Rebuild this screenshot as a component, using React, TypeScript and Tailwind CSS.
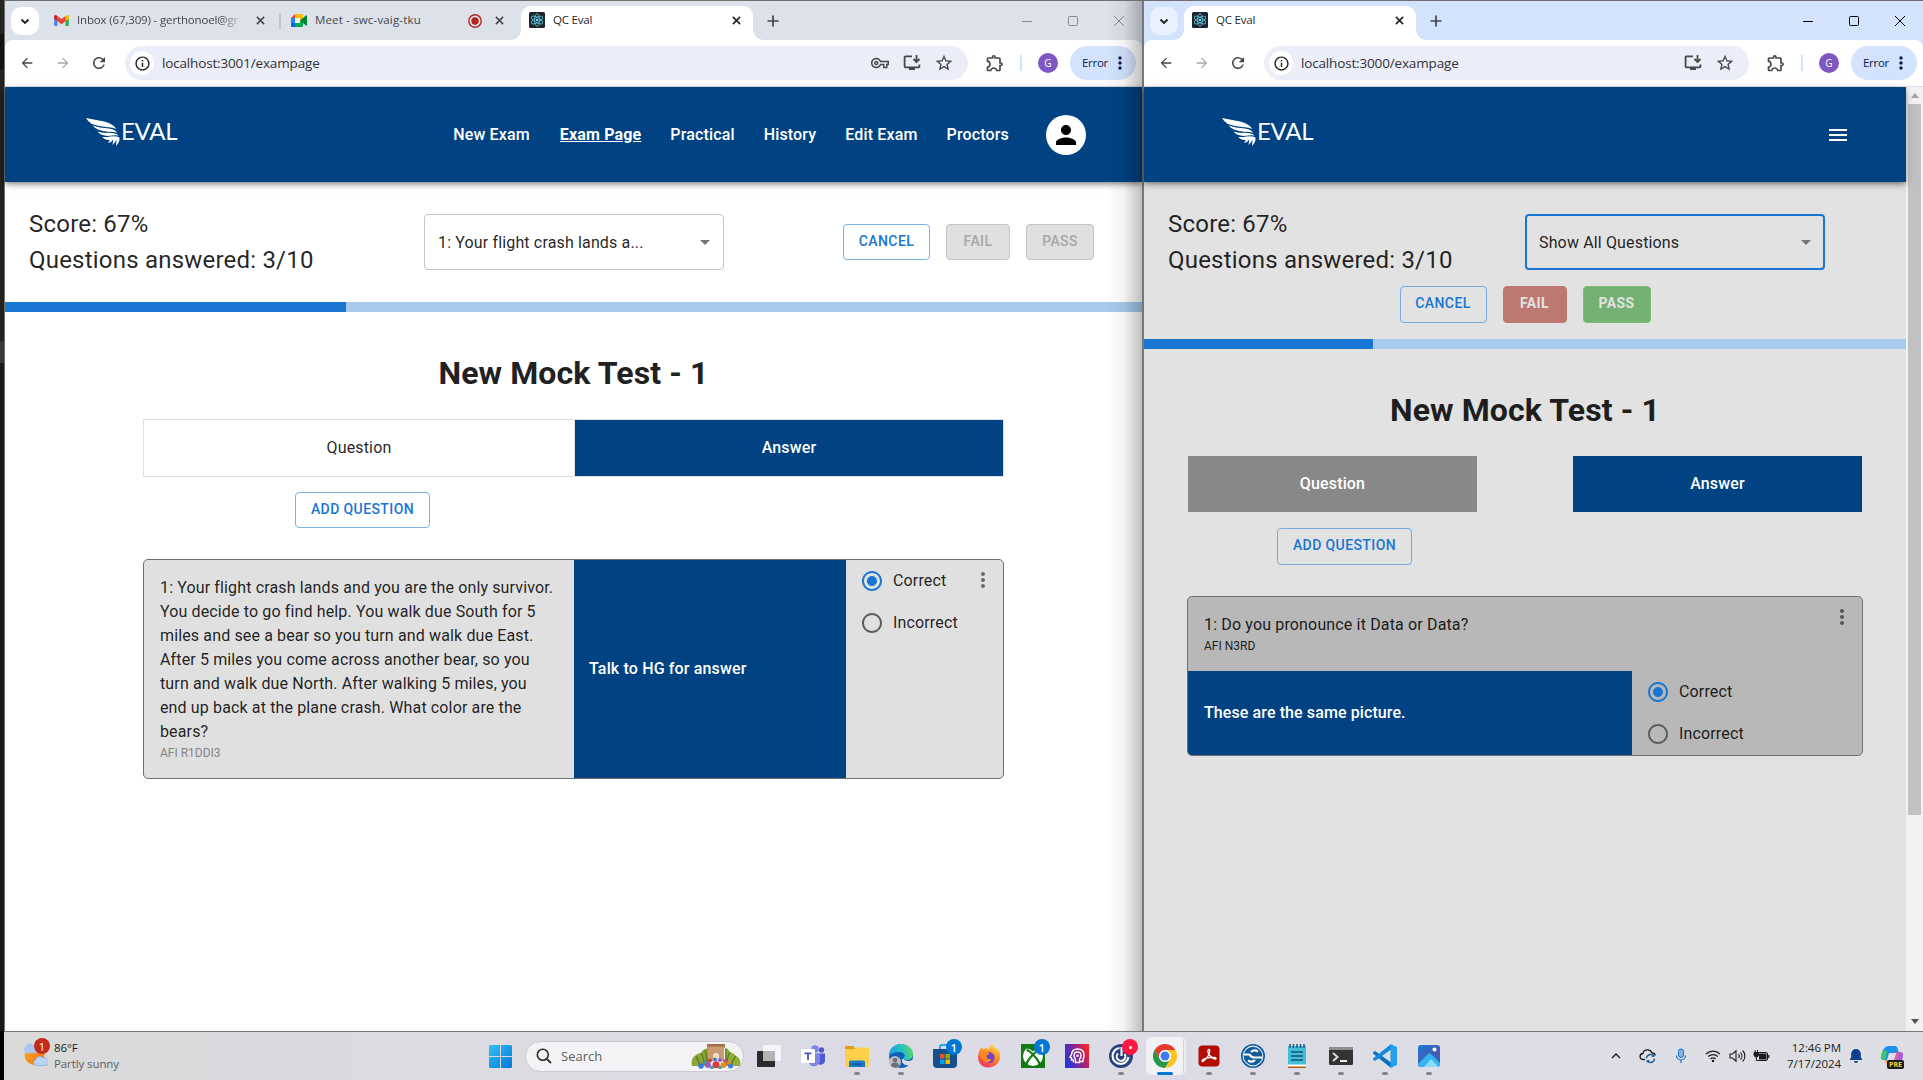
import React from "react";
import {
  MdArrowBack,
  MdArrowForward,
  MdRefresh,
  MdInfoOutline,
  MdOutlineVpnKey,
  MdStarBorder,
  MdOutlineExtension,
  MdMoreVert,
  MdPerson,
  MdMenu,
  MdArrowDropDown,
  MdRadioButtonChecked,
  MdRadioButtonUnchecked,
} from "react-icons/md";

const UI = "font-['Open_Sans','Noto_Sans',sans-serif]";

/* ---------- small drawings ---------- */

function Cross({ className = "" }: { className?: string }) {
  return (
    <svg viewBox="0 0 10 10" className={`size-[9px] shrink-0 ${className}`}>
      <path d="M1 1 9 9M9 1 1 9" stroke="currentColor" strokeWidth="1.7" fill="none" />
    </svg>
  );
}

function GmailIcon() {
  return (
    <svg viewBox="0 0 16 12" className="h-[11px] w-[15px] shrink-0">
      <path d="M0 1.5V11a1 1 0 0 0 1 1h2.6V4.5z" fill="#4285f4" />
      <path d="M16 1.5V11a1 1 0 0 1-1 1h-2.6V4.5z" fill="#34a853" />
      <path d="M12.400 1Q15.500-1 16 1.500V4l-3.600 2.800z" fill="#fbbc04" />
      <path d="M3.600 1Q.5-1 0 1.500V4l3.600 2.800z" fill="#c5221f" />
      <path d="M3.600 1 8 4.300 12.400 1v5.700L8 10 3.600 6.700z" fill="#ea4335" />
    </svg>
  );
}

function MeetIcon() {
  return (
    <svg viewBox="0 0 16 13" className="h-[13px] w-[16px] shrink-0">
      <path d="M0 4 4 0v4z" fill="#ea4335" />
      <path d="M4 0h7a1 1 0 0 1 1 1v4L9 6.500V4H4z" fill="#fbbc04" />
      <path d="M0 4h4v5H0z" fill="#2684fc" />
      <path d="M0 9h4v4H1a1 1 0 0 1-1-1z" fill="#0066da" />
      <path d="M4 4h5v5H4z" fill="#fff" />
      <path d="M4 9h5V6.500l3 1.500v4a1 1 0 0 1-1 1H4z" fill="#00ac47" />
      <path d="M9 6.500 15 1.500q1-.5 1 .5v9q0 1-1 .500z" fill="#00832d" />
    </svg>
  );
}

function ReactFavicon() {
  return (
    <svg viewBox="0 0 16 16" className="size-4 shrink-0">
      <rect width="16" height="16" rx="1.500" fill="#20232a" />
      <g fill="none" stroke="#53b6d0" strokeWidth=".9">
        <ellipse cx="8" cy="8" rx="6.300" ry="2.500" transform="rotate(30 8 8)" />
        <ellipse cx="8" cy="8" rx="6.300" ry="2.500" transform="rotate(90 8 8)" />
        <ellipse cx="8" cy="8" rx="6.300" ry="2.500" transform="rotate(150 8 8)" />
      </g>
      <circle cx="8" cy="8" r="1.300" fill="#61dafb" />
    </svg>
  );
}

function InstallIcon() {
  return (
    <svg viewBox="0 0 20 20" className="size-5 shrink-0">
      <g fill="none" stroke="currentColor" strokeWidth="1.800">
        <path d="M10 3.300H3.500q-.900 0-.900.900v9.200q0 .900.900.900h13q.900 0 .900-.900V11.500" />
        <path d="M14.500 2v6.500M11.500 6l3 3 3-3" />
      </g>
      <path d="M7 14.500h6V17H7z" fill="currentColor" />
    </svg>
  );
}

function WingLogo() {
  return (
    <div className="flex h-[28px] items-start text-white">
      <svg viewBox="0 0 34 28" className="h-[28px] w-[34px] shrink-0" fill="currentColor">
        <path d="M0 0 18 3.500Q27 5.500 30.500 11 26 9.200 22 9.300 10 8 5.500 5.800 2 3.500 0 0z" />
        <path d="M6.500 7.500Q14 10 21 10.200 28 10.500 31.500 14.800 27 13.500 22 13.800 11 13 6.500 7.500z" />
        <path d="M11.500 13.500Q16 15.200 22 14.800 29 14.500 32.800 17.500 28 17 24 17.800 15.500 18.500 11.500 13.500z" />
        <path d="M16 18.700Q20 19.500 24 18.500 30 17.500 33.500 19.500 34 24 30 28L30.500 21.500Q29.500 24.500 26.500 27L27.300 21.500Q25.500 24.500 22 25L24 21.800Q19.500 23 16 18.700z" />
      </svg>
      <span className="ml-[1px] mt-[1px] font-['Lato',sans-serif] text-[24px] font-normal leading-[24px] tracking-[-0.3px]">
        EVAL
      </span>
    </div>
  );
}

/* ---------- browser chrome ---------- */

function ActiveTab() {
  return (
    <div className="relative flex h-[34px] w-[232px] shrink-0 items-center self-end rounded-t-[10px] bg-white pl-2 pr-[12px]">
      <div className="absolute -left-[10px] bottom-0 size-[10px] bg-[radial-gradient(circle_at_0_0,transparent_9.5px,white_10px)]" />
      <div className="absolute -right-[10px] bottom-0 size-[10px] bg-[radial-gradient(circle_at_100%_0,transparent_9.5px,white_10px)]" />
      <div className="mb-[6px] flex w-full items-center">
        <ReactFavicon />
        <span className="ml-2 text-[11.5px] leading-4 tracking-[-0.2px] text-[#1f1f1f]">QC Eval</span>
        <Cross className="ml-auto text-[#1f1f1f]" />
      </div>
    </div>
  );
}

function TabSearch({ tone }: { tone: string }) {
  return (
    <div className={`flex h-7 w-7 shrink-0 items-center justify-center rounded-[10px] ${tone}`}>
      <svg viewBox="0 0 10 10" className="size-[10px]">
        <path d="m1.500 3.500 3.500 3.500 3.500-3.500" stroke="#1f1f1f" strokeWidth="1.800" fill="none" />
      </svg>
    </div>
  );
}

function WindowButtons({ tone }: { tone: string }) {
  return (
    <div className={`ml-auto flex ${tone}`}>
      <svg viewBox="0 0 46 38" className="h-[38px] w-[46px]">
        <path d="M18 19.500h10" stroke="currentColor" />
      </svg>
      <svg viewBox="0 0 46 38" className="h-[38px] w-[46px]">
        <rect x="18.500" y="14.500" width="9" height="9" rx="1" fill="none" stroke="currentColor" />
      </svg>
      <svg viewBox="0 0 46 38" className="h-[38px] w-[46px]">
        <path d="m18 14 10 10M28 14 18 24" stroke="currentColor" fill="none" />
      </svg>
    </div>
  );
}

function Plus() {
  return (
    <svg viewBox="0 0 12 12" className="ml-[14px] size-3 shrink-0">
      <path d="M6 .500v11M.500 6h11" stroke="#444" strokeWidth="1.700" />
    </svg>
  );
}

function Toolbar({ port, showKey }: { port: string; showKey?: boolean }) {
  return (
    <div className="flex h-[47px] shrink-0 items-center rounded-t-lg border-b border-[#dfe1e5] bg-white pl-3 pr-1.5 text-[#474747]">
      <div className="flex gap-4">
        <MdArrowBack className="size-5 p-[2px]" />
        <MdArrowForward className="size-5 p-[2px] text-[#a8a8a8]" />
        <MdRefresh className="size-5 p-px" />
      </div>
      <div className="ml-4 flex h-[34px] flex-1 items-center rounded-full bg-[#ebeef8] pl-[5px] pr-[14px]">
        <div className="flex size-6 items-center justify-center rounded-full bg-white">
          <MdInfoOutline className="size-[17px] text-[#1f1f1f]" />
        </div>
        <span className="ml-2 text-[13.500px] leading-5 tracking-[-0.16px] text-[#303134]">localhost:{port}/exampage</span>
        <div className="ml-auto flex items-center gap-3">
          {showKey && <MdOutlineVpnKey className="size-5 p-px" />}
          <InstallIcon />
          <MdStarBorder className="size-5" />
        </div>
      </div>
      <MdOutlineExtension className="ml-[17px] size-5" />
      <div className="ml-[15px] h-4 w-[2px] bg-[#d3e3fd]" />
      <div className="ml-4 flex size-5 items-center justify-center rounded-full bg-[#7e57c2] text-[10px] text-white">G</div>
      <div className="ml-3 flex h-[34px] w-[66px] items-center rounded-full bg-[#d3e3fd] pl-3 text-[#0b1c4d]">
        <span className="w-[28px] whitespace-nowrap text-[11.500px] leading-4 tracking-[-0.3px]">Error</span>
        <MdMoreVert className="size-5" />
      </div>
    </div>
  );
}

/* ---------- shared page widgets ---------- */

function OutlineButton({ children, className = "" }: { children: React.ReactNode; className?: string }) {
  return (
    <div
      className={`flex shrink-0 items-center justify-center rounded border pb-[3px] text-[14px] font-medium leading-6 tracking-[0.4px] ${className}`}
    >
      {children}
    </div>
  );
}

function Select({ label, className }: { label: string; className: string }) {
  return (
    <div className={`flex h-14 w-[300px] shrink-0 items-center rounded text-[16px] tracking-[0.15px] text-black/87 ${className}`}>
      <span className="pt-px">{label}</span>
      <MdArrowDropDown className="ml-auto size-6 text-[#757575]" />
    </div>
  );
}

function Score() {
  return (
    <div className="text-[24px] leading-9 tracking-[0.21px] text-black/87">
      <p>Score: 67%</p>
      <p>Questions answered: 3/10</p>
    </div>
  );
}

function Progress() {
  return (
    <div className="h-[10px] bg-[#a7caed]">
      <div className="h-full w-[30%] bg-[#1976d2]" />
    </div>
  );
}

function Verdict() {
  return (
    <div className="flex flex-col text-[16px] tracking-[0.15px] text-black/87">
      <div className="flex h-[42px] items-center gap-[9px]">
        <MdRadioButtonChecked className="size-6 text-[#1976d2]" />
        <span>Correct</span>
      </div>
      <div className="flex h-[42px] items-center gap-[9px]">
        <MdRadioButtonUnchecked className="size-6 text-[#5c5c5c]" />
        <span>Incorrect</span>
      </div>
    </div>
  );
}

/* ---------- left window ---------- */

function LeftWindow() {
  const links = ["Practical", "History", "Edit Exam", "Proctors"];
  return (
    <div className="relative flex w-[1138px] shrink-0 flex-col border-l border-t border-[#707070] bg-white">
      <div className="bg-[#dde1e9]">
        <div className={`flex h-[39px] items-center pl-[6px] ${UI}`}>
          <TabSearch tone="bg-white" />
          <div className="ml-[15px] flex items-center">
            <GmailIcon />
            <div className="-mt-px ml-2 w-[168px] whitespace-nowrap text-[11.500px] leading-4 tracking-[-0.15px] text-[#45474a] [mask-image:linear-gradient(to_right,black_85%,transparent_99%)]">
              Inbox (67,309) - gerthonoel@gr
            </div>
            <Cross className="ml-[11px] text-[#474747]" />
          </div>
          <div className="ml-[14px] h-4 w-[2px] bg-[#bfc3ca]" />
          <div className="ml-[10px] flex items-center">
            <MeetIcon />
            <span className="-mt-px ml-2 w-[153px] whitespace-nowrap text-[11.500px] leading-4 tracking-[0.160px] text-[#45474a]">Meet - swc-vaig-tku</span>
            <svg viewBox="0 0 14 14" className="size-[14px]">
              <circle cx="7" cy="7" r="6.200" fill="none" stroke="#b3261e" strokeWidth="1.400" />
              <circle cx="7" cy="7" r="3.700" fill="#b3261e" />
            </svg>
            <Cross className="ml-[13px] text-[#474747]" />
          </div>
          <div className="w-[17px]" />
          <ActiveTab />
          <Plus />
          <WindowButtons tone="text-[#8a8a8a]" />
        </div>
        <div className={UI}>
          <Toolbar port="3001" showKey />
        </div>
      </div>

      <header className="z-10 flex h-[95px] shrink-0 items-center bg-[#004282] pl-[81px] pr-[56px] text-white shadow-[0_2px_4px_-1px_rgba(0,0,0,.3),0_4px_5px_rgba(0,0,0,.16),0_1px_10px_rgba(0,0,0,.12)]">
        <div className="-mt-[5px]">
          <WingLogo />
        </div>
        <nav className="ml-auto flex items-center gap-[29px] text-[16px] font-medium tracking-[0.150px]">
          <span className="mr-px">New Exam</span>
          <span className="font-bold underline">Exam Page</span>
          {links.map((l) => (
            <span key={l}>{l}</span>
          ))}
        </nav>
        <div className="ml-[37px] flex size-10 items-center justify-center rounded-full bg-white">
          <MdPerson className="size-[30px] text-black" />
        </div>
      </header>

      <div className="flex h-[120px] shrink-0 items-start pl-6">
        <div className="mt-6 w-[395px]">
          <Score />
        </div>
        <Select label="1: Your flight crash lands a..." className="mt-8 border border-[#c4c4c4] pl-[13px] pr-[6px]" />
        <div className="ml-[119px] mt-[42px] flex gap-4">
          <OutlineButton className="h-9 w-[87px] border-[#7cb0e6] text-[#1976d2]">CANCEL</OutlineButton>
          <OutlineButton className="h-9 w-16 border-[#c4c4c4] bg-[#e0e0e0] text-[#a6a6a6]">FAIL</OutlineButton>
          <OutlineButton className="h-9 w-[68px] border-[#c4c4c4] bg-[#e0e0e0] text-[#a6a6a6]">PASS</OutlineButton>
        </div>
      </div>
      <Progress />

      <h1 className="mt-[41px] text-center text-[32px] font-bold leading-10 tracking-[0.12px] text-[#212121]">New Mock Test - 1</h1>

      <div className="ml-[138px] mt-[26px] w-[861px]">
        <div className="flex h-[58px] border border-[#e0e0e0] text-[16px] tracking-[0.150px]">
          <div className="flex w-[431px] items-center justify-center border-r border-[#e0e0e0] text-black/87">Question</div>
          <div className="flex flex-1 items-center justify-center bg-[#004282] font-medium text-white">Answer</div>
        </div>
        <OutlineButton className="ml-[152px] mt-[15px] h-9 w-[135px] border-[#7cb0e6] text-[#1976d2]">ADD QUESTION</OutlineButton>
        <div className="mt-[31px] flex h-[220px] overflow-hidden rounded-[5px] border border-[#707070] bg-[#e0e0e0]">
          <div className="w-[430px] pl-4 pt-4">
            <p className="w-[395.500px] text-[16px] leading-6 tracking-[0.135px] text-black/87">
              1: Your flight crash lands and you are the only survivor. You decide to go find help. You walk due South for 5 miles and
              see a bear so you turn and walk due East. After 5 miles you come across another bear, so you turn and walk due North.
              After walking 5 miles, you end up back at the plane crash. What color are the bears?
            </p>
            <p className="text-[12px] leading-[19px] text-[#858585]">AFI R1DDI3</p>
          </div>
          <div className="flex w-[272px] items-center bg-[#004282] pl-[15px] text-[16px] font-medium tracking-[0.150px] text-white">
            Talk to HG for answer
          </div>
          <div className="flex flex-1 pl-[14px]">
            <Verdict />
            <MdMoreVert className="ml-auto mr-[8px] mt-2 size-6 text-[#6b6b6b]" />
          </div>
        </div>
      </div>

      <div className="absolute bottom-0 right-0 top-0 z-20 w-9 bg-gradient-to-r from-transparent via-black/5 to-black/25" />
    </div>
  );
}

/* ---------- right window ---------- */

function RightWindow() {
  return (
    <div className="flex w-[781px] shrink-0 flex-col border-l-2 border-t border-l-[#777] border-t-[#707070] bg-[#e2e2e2]">
      <div className="bg-[#d3e3fd]">
        <div className={`flex h-[39px] items-center pl-[6px] ${UI}`}>
          <TabSearch tone="bg-[#e9f0fe]" />
          <div className="w-[6px]" />
          <ActiveTab />
          <Plus />
          <WindowButtons tone="text-black" />
        </div>
        <div className={UI}>
          <Toolbar port="3000" />
        </div>
      </div>

      <div className="flex flex-1">
        <div className="flex w-[762px] flex-col">
          <header className="z-10 flex h-[95px] shrink-0 items-center justify-between bg-[#004282] pl-[78px] pr-[56px] text-white shadow-[0_2px_4px_-1px_rgba(0,0,0,.3),0_4px_5px_rgba(0,0,0,.16),0_1px_10px_rgba(0,0,0,.12)]">
            <div className="-mt-[5px]">
              <WingLogo />
            </div>
            <MdMenu className="size-6" />
          </header>

          <div className="flex h-[104px] shrink-0 items-start pl-6">
            <div className="mt-6 w-[357px]">
              <Score />
            </div>
            <Select label="Show All Questions" className="mt-8 border-2 border-[#1976d2] pl-3 pr-[5px]" />
          </div>
          <div className="flex h-[53px] shrink-0 items-start justify-center gap-4">
            <OutlineButton className="h-[37px] w-[87px] border-[#7aaadb] text-[#1976d2]">CANCEL</OutlineButton>
            <OutlineButton className="h-[37px] w-16 border-[#be7872] bg-[#be7872] !font-bold text-[#e2e2e2]">FAIL</OutlineButton>
            <OutlineButton className="h-[37px] w-[68px] border-[#7fbd74] bg-[#72b172] !font-bold text-[#e2e2e2]">PASS</OutlineButton>
          </div>
          <Progress />

          <h1 className="mt-[41px] text-center text-[32px] font-bold leading-10 tracking-[0.12px] text-[#1e1e1e]">New Mock Test - 1</h1>

          <div className="ml-[43px] mt-[26px] w-[676px]">
            <div className="flex h-14 justify-between px-px text-[16px] font-medium tracking-[0.150px] text-white">
              <div className="flex w-[289px] items-center justify-center bg-[#888]">Question</div>
              <div className="flex w-[289px] items-center justify-center bg-[#004282]">Answer</div>
            </div>
            <OutlineButton className="ml-[90px] mt-4 h-[37px] w-[135px] border-[#7aaadb] text-[#1976d2]">ADD QUESTION</OutlineButton>
            <div className="mt-[31px] flex h-[160px] flex-col overflow-hidden rounded-[5px] border border-[#707070] bg-[#b8b8b8]">
              <div className="flex h-[74px] items-start pl-4 tracking-[0.150px] text-black/87">
                <div className="pt-4">
                  <p className="text-[16px] leading-6">1: Do you pronounce it Data or Data?</p>
                  <p className="text-[12px] leading-[19px] tracking-[0px]">AFI N3RD</p>
                </div>
                <MdMoreVert className="ml-auto mr-[8px] mt-2 size-6 text-[#555]" />
              </div>
              <div className="flex h-[84px]">
                <div className="flex w-[444px] items-center bg-[#004282] pl-4 text-[16px] font-medium tracking-[0.100px] text-white">
                  These are the same picture.
                </div>
                <div className="pl-[14px]">
                  <Verdict />
                </div>
              </div>
            </div>
          </div>
        </div>
        <div className="flex flex-1 flex-col items-center bg-[#f1f1f1]">
          <svg viewBox="0 0 8 5" className="mt-[6px] h-[5px] w-2">
            <path d="M4 0 8 5H0z" fill="#a3a3a3" />
          </svg>
          <div className="mt-[6px] h-[711px] w-[13px] bg-[#c1c1c1]" />
          <svg viewBox="0 0 8 5" className="mb-[7px] mt-auto h-[5px] w-2">
            <path d="M4 5 8 0H0z" fill="#505050" />
          </svg>
        </div>
      </div>
    </div>
  );
}

/* ---------- taskbar ---------- */

function AppSlot({ children, running, badge }: { children: React.ReactNode; running?: boolean; badge?: React.ReactNode }) {
  return (
    <div className="relative flex h-[48px] w-11 shrink-0 items-center justify-center">
      <div>{children}</div>
      {running && <div className="absolute bottom-[5px] left-[19px] h-[3px] w-[6px] rounded-full bg-[#858585]" />}
      {badge && <div className="absolute right-[5px] top-[7px]">{badge}</div>}
    </div>
  );
}

function Badge({ text, tone }: { text: string; tone: string }) {
  return (
    <div className={`flex size-4 items-center justify-center rounded-full text-[11px] font-semibold leading-none text-white ${tone}`}>
      {text}
    </div>
  );
}

const ICON = "size-6 block";

function Taskbar() {
  return (
    <div className={`flex h-12 flex-1 items-center bg-gradient-to-r from-[#dadadb] via-[#dcdbe6] to-[#dedfe5] ${UI}`}>
      <div className="flex w-[485px] items-center pl-[18px]">
        <div className="relative -mt-[6px]">
          <svg viewBox="0 0 26 28" className="h-[28px] w-[26px]">
            <defs>
              <linearGradient id="sun" x1="0" y1="0" x2="1" y2="1">
                <stop offset="0" stopColor="#fbb034" />
                <stop offset="1" stopColor="#f0700a" />
              </linearGradient>
            </defs>
            <circle cx="12.500" cy="16" r="10" fill="url(#sun)" />
            <path d="M4 14a3.500 3.500 0 0 1-.5-6.200 4.500 4.500 0 0 1 8-1.500 4 4 0 0 1 3 7.700z" fill="#a9c6f5" />
            <path d="M14 26.500a3 3 0 0 1-.3-5.800 4.500 4.500 0 0 1 8-1.400 3.700 3.700 0 0 1 2 7.200z" fill="#b9d2f8" stroke="#86a9e4" strokeWidth=".7" />
          </svg>
          <div className="absolute -right-[2px] -top-[1px] flex size-4 items-center justify-center rounded-full bg-[#c42b1c] text-[11px] leading-none text-white">1</div>
        </div>
        <div className="ml-[6px] text-[11.500px] leading-4 tracking-[-0.1px]">
          <p className="text-[#1b1b1b]">86°F</p>
          <p className="text-[#5d5d5d]">Partly sunny</p>
        </div>
      </div>

      <svg viewBox="0 0 23 23" className="size-[23px] shrink-0">
        <defs>
          <linearGradient id="win" x1="0" y1="0" x2="1" y2="1" gradientUnits="objectBoundingBox">
            <stop offset="0" stopColor="#35c0f5" />
            <stop offset="1" stopColor="#0078d4" />
          </linearGradient>
        </defs>
        <path d="M1 0h10v11H0V1zM12 0h10l1 1v10H12zM0 12h11v11H1l-1-1zM12 12h11v10l-1 1H12z" fill="url(#win)" />
      </svg>

      <div className="ml-[13px] flex h-[31px] w-[219px] shrink-0 items-center rounded-full border border-[#c9c9d0] bg-[#f3f3f6] pl-[10px] pr-[2px]">
        <svg viewBox="0 0 16 16" className="size-4">
          <circle cx="6.800" cy="6.800" r="5.500" fill="none" stroke="#2b2b2b" strokeWidth="1.600" />
          <path d="m10.800 10.800 4.200 4.200" stroke="#2b2b2b" strokeWidth="1.800" />
        </svg>
        <span className="ml-[9px] text-[13px] leading-5 text-[#5f5f5f]">Search</span>
        <svg viewBox="0 0 50 26" className="ml-auto h-[26px] w-[50px]">
          <path d="M1 23Q-1 16 5 12 8 10 10 10 12 6 15 6l4-3v20z" fill="#8aa636" />
          <path d="M49 23q2-7-4-10-2-3-6-4-2-4-5-4v18z" fill="#93ad3a" />
          <path d="M5 13q3 4 3 9M10 10q3 5 3 12M14 7q2 7 2 14M45 13q-4 4-4 9M39 9q-3 5-3 13M35 6v14" stroke="#5b7c22" strokeWidth="1.300" fill="none" />
          <path d="M16 1h18v4h-1v13h-5v-6q-3-4-6 0v6h-5V5h-1z" fill="#c79a70" />
          <path d="M16 1h18v2.500H16z" fill="#9c6f4a" />
          <path d="M22 18v-6q3-4 6 0v6z" fill="#f3dcbc" />
          <circle cx="14" cy="19" r="2" fill="#3a9c9c" />
          <circle cx="19" cy="17.500" r="2" fill="#d83b3b" />
          <circle cx="24" cy="16.500" r="2" fill="#3b7fe0" />
          <circle cx="29" cy="17" r="2" fill="#8b5cd0" />
          <circle cx="34" cy="18" r="2" fill="#d14a88" />
          <circle cx="38" cy="20" r="2" fill="#f28a1e" />
          <circle cx="10" cy="23" r="2.700" fill="#2b7de0" />
          <circle cx="17" cy="22" r="3" fill="#9b5cd0" />
          <circle cx="25" cy="21.800" r="3.500" fill="#d83b3b" />
          <circle cx="32.500" cy="22" r="3" fill="#f28a1e" />
          <circle cx="39.500" cy="23" r="2.500" fill="#3b7fe0" />
          <circle cx="21" cy="24.500" r="1.700" fill="#3a9c9c" />
          <circle cx="29" cy="24.500" r="1.700" fill="#2fa6a0" />
        </svg>
      </div>

      <div className="ml-[3px] flex">
        <AppSlot>
          <svg viewBox="0 0 24 24" className={ICON}>
            <rect x="0" y="7" width="18" height="16" rx="1" fill="#2b2b2b" />
            <rect x="6" y="1" width="18" height="16" rx="1" fill="#fff" opacity=".72" />
            <rect x="6" y="7" width="12" height="10" fill="#b4b4b4" />
          </svg>
        </AppSlot>
        <AppSlot>
          <svg viewBox="0 0 24 24" className={ICON}>
            <circle cx="14" cy="5" r="3.800" fill="#7b83eb" />
            <circle cx="20.500" cy="6" r="2.700" fill="#5059c9" />
            <path d="M16 9.500h8v7a4.500 4.500 0 0 1-6 4z" fill="#5059c9" />
            <path d="M8 9.500h11v7a6 6 0 0 1-11 3z" fill="#7b83eb" />
            <rect x="0" y="5" width="14" height="14" rx="1" fill="#fff" />
            <path d="M3.500 8.500h7v1.800H7.900V16H6.100v-5.700H3.500z" fill="#4b53bc" />
          </svg>
        </AppSlot>
        <AppSlot running>
          <svg viewBox="0 0 24 24" className={ICON}>
            <path d="M0 3q0-1 1-1h7l3 3H0z" fill="#e09c12" />
            <path d="M0 5h10l2-1.500h11q1 0 1 1V22q0 1-1 1H1q-1 0-1-1z" fill="#fdd04b" />
            <path d="M4 23v-5q0-1.500 1.500-1.500h13q1.500 0 1.500 1.500v5z" fill="#1979c9" />
            <path d="M7 19.500h10v1.200H7z" fill="#0d4f8c" />
          </svg>
        </AppSlot>
        <AppSlot running>
          <svg viewBox="0 0 24 24" className={ICON}>
            <defs>
              <linearGradient id="edge" x1="0" y1=".4" x2="1" y2=".2">
                <stop offset="0" stopColor="#1fa0e0" />
                <stop offset=".55" stopColor="#27c4c0" />
                <stop offset="1" stopColor="#66da52" />
              </linearGradient>
            </defs>
            <circle cx="12" cy="12" r="12" fill="#0f62b5" />
            <path d="M0 11C1 4 6 0 12 0c7 0 12 5 12 10 0 4-3 6-6 6-3 0-4-1-3-2.500 2-3-1-5.500-4-5.500C6 8 1 9 0 13z" fill="url(#edge)" />
            <path d="M14.500 14.500c.5 2.500 5 3.500 9 1.200L24 19q-2 2-3 2c-4 1-8-1-8-4.500 0-1 .5-2 1.500-2z" fill="#dddde4" />
            <circle cx="6" cy="18" r="6" fill="#b9bcc2" />
            <circle cx="6" cy="16" r="2.300" fill="#6b6f76" />
            <path d="M2 22q0-3.500 4-3.500t4 3.500q-4 3.500-8 0z" fill="#6b6f76" />
          </svg>
        </AppSlot>
        <AppSlot badge={<Badge text="1" tone="bg-[#0078d4]" />}>
          <svg viewBox="0 0 24 24" className={ICON}>
            <path d="M7 6V2.500Q7 1 8.500 1h7Q17 1 17 2.500V6" fill="none" stroke="#29a8ea" strokeWidth="2" />
            <path d="M0 5h24v15q0 4-4 4H4q-4 0-4-4z" fill="#174f8d" />
            <path d="M7 10h4.500v4.500H7z" fill="#f25022" />
            <path d="M12.500 10H17v4.500h-4.500z" fill="#7fba00" />
            <path d="M7 15.500h4.500V20H7z" fill="#00a4ef" />
            <path d="M12.500 15.500H17V20h-4.500z" fill="#ffb900" />
          </svg>
        </AppSlot>
        <AppSlot>
          <svg viewBox="0 0 24 24" className={ICON}>
            <defs>
              <linearGradient id="fox" x1=".8" y1="0" x2=".3" y2="1">
                <stop offset="0" stopColor="#ffe14d" />
                <stop offset=".45" stopColor="#ff9121" />
                <stop offset="1" stopColor="#f0306a" />
              </linearGradient>
            </defs>
            <path d="M3 6q.5-2 2-3 0 2 1.500 2.500Q9 3.500 12 5q0-3 4-5 0 3 3 5l1-1q4 5 3 10c-1 6-6 9.500-11.500 9.500C5 23.500 1 19 1 13q0-4 2-7z" fill="url(#fox)" />
            <circle cx="12" cy="13.500" r="5.500" fill="#7540c8" />
            <path d="M3 8q3-2 6 0 3 0 3.500 2-3 .5-3 3 1 3 5 2-2 4-6 3-5-2-5.500-10z" fill="#ff8a24" />
          </svg>
        </AppSlot>
        <AppSlot badge={<Badge text="1" tone="bg-[#0078d4]" />}>
          <svg viewBox="0 0 24 24" className={ICON}>
            <path d="M0 0h24v24H0z" fill="#107c10" />
            <circle cx="12" cy="12" r="10" fill="#fff" />
            <path d="M5 4.500Q8 4 12 7.500 16 4 19 4.500 15.500 1.500 12 1.500T5 4.500z" fill="#107c10" />
            <path d="M5.500 6Q8 6.500 12 10.500 16 6.500 18.500 6M12 10.500Q7 15.500 5 20.500M12 10.500q5 5 7 10" fill="none" stroke="#107c10" strokeWidth="2.200" />
          </svg>
        </AppSlot>
        <AppSlot>
          <svg viewBox="0 0 24 24" className={ICON}>
            <defs>
              <linearGradient id="head" x1="0" y1=".6" x2="1" y2=".2">
                <stop offset="0" stopColor="#2637d8" />
                <stop offset=".5" stopColor="#8a2390" />
                <stop offset="1" stopColor="#ff2320" />
              </linearGradient>
            </defs>
            <path d="M0 0h24v24H0z" fill="url(#head)" />
            <path d="M8.500 18.500V16H6.500v-2.500L5 13l1.500-2.500Q7 5 12.500 5 19 5 19 11q0 3-1 4.500v2h-3" fill="none" stroke="#fff" strokeWidth="1.400" />
            <path d="M10.500 18.500v-3.500Q9 13.500 9 11.500 9 8 12.500 8T16 11.500q0 2-1.500 3.500v3.500z" fill="none" stroke="#fff" strokeWidth="1.400" />
            <circle cx="12.500" cy="11.800" r="1.300" fill="#fff" />
          </svg>
        </AppSlot>
        <AppSlot
          running
          badge={
            <div className="flex size-4 items-center justify-center rounded-full bg-[#ff1744]">
              <div className="size-[3px] rounded-full bg-white" />
            </div>
          }
        >
          <svg viewBox="0 0 24 24" className={ICON}>
            <circle cx="12" cy="12" r="12" fill="#25427e" />
            <path d="M10.500 4a8 8 0 1 0 9 9" fill="none" stroke="#fff" strokeWidth="2.200" />
            <path d="M12.500 3v9M9 9.500a4.300 4.300 0 1 0 6.500.500" fill="none" stroke="#fff" strokeWidth="2" />
          </svg>
        </AppSlot>
        <div className="relative flex h-[48px] w-11 items-center justify-center">
          <div className="flex h-[38px] w-[38px] items-center justify-center rounded-[5px] border-r border-[#d2d2da] bg-[#f1f1f6] shadow-[2px_0_0_#ececf2]">
            <svg viewBox="0 0 24 24" className={ICON}>
              <circle cx="12" cy="12" r="12" fill="#fff" />
              <path d="M1.600 6A12 12 0 0 1 22.400 6H12a6 6 0 0 0-5.200 9z" fill="#e33b2e" />
              <path d="M22.400 6A12 12 0 0 1 12 24l5.200-9A6 6 0 0 0 12 6z" fill="#fcc31e" />
              <path d="M12 24A12 12 0 0 1 1.600 6l5.200 9a6 6 0 0 0 10.400 0z" fill="#279847" />
              <circle cx="12" cy="12" r="5.700" fill="#fff" />
              <circle cx="12" cy="12" r="4.500" fill="#3b7ded" />
            </svg>
          </div>
          <div className="absolute bottom-[5px] left-[14px] h-[3px] w-4 rounded-full bg-[#0078d4]" />
        </div>
        <AppSlot running>
          <svg viewBox="0 0 24 24" className={ICON}>
            <rect x="1.500" y="1.500" width="21" height="21" rx="4" fill="#b30b00" />
            <path d="M11.500 5.500q1.500-.5 1.200 2-.7 5-6 9.500-1.500 1-1.700 0 0-1.500 4.500-2.800 4-1.100 8-.7 2 .4 1.500 1.300-1 1-4-1-4-3.300-4.200-6.500 0-1.500.7-1.800z" fill="none" stroke="#fff" strokeWidth="1.300" />
          </svg>
        </AppSlot>
        <AppSlot running>
          <svg viewBox="0 0 24 24" className={ICON}>
            <circle cx="12" cy="12" r="11.200" fill="#e9eef4" stroke="#115c9a" strokeWidth="1.600" />
            <circle cx="12" cy="12" r="9.300" fill="#115c9a" />
            <path d="M3 10.500h5.500q1.500 3 5 3H21M17 7.500q-4-2.500-7 .5M7 16.500q4 2.500 7-.5" fill="none" stroke="#fff" strokeWidth="2.200" strokeLinejoin="round" />
          </svg>
        </AppSlot>
        <AppSlot running>
          <svg viewBox="0 0 24 24" className={ICON}>
            <rect x="3" y="2" width="18" height="20" rx="1" fill="#44bcd8" />
            <path d="M3 20.500h18V23q0 1-1 1H4q-1 0-1-1z" fill="#fff" />
            <path d="M3 22.500h18V24H3z" fill="#b45a14" />
            <path d="M5 0v4M8.500 0v4M12 0v4M15.500 0v4M19 0v4" stroke="#1d5a7c" strokeWidth="1.500" />
            <path d="M6 8h12M6 12h12M6 16h12" stroke="#12516f" strokeWidth="1.700" />
          </svg>
        </AppSlot>
        <AppSlot running>
          <svg viewBox="0 0 24 24" className={ICON}>
            <rect x="0" y="3" width="24" height="18" rx="1.500" fill="#333" />
            <path d="M0 6V4.500Q0 3 1.500 3h21Q24 3 24 4.500V6z" fill="#8d8d8d" />
            <path d="m4 9 4.500 4L4 17" fill="none" stroke="#d8d8d8" strokeWidth="2" />
            <path d="M11 17h7" stroke="#fff" strokeWidth="1.800" />
          </svg>
        </AppSlot>
        <AppSlot running>
          <svg viewBox="0 0 24 24" className={ICON}>
            <path d="M0 8.500 2 7l16 11.500V24L0 9.500z" fill="#0a6fbd" />
            <path d="M0 15.500 2 17 18 5.500V0L0 14.500z" fill="#1389d8" />
            <path d="M17.500 0 24 3v18l-6.500 3z" fill="#26a0ef" />
          </svg>
        </AppSlot>
        <AppSlot running>
          <svg viewBox="0 0 24 24" className={ICON}>
            <defs>
              <linearGradient id="pho" x1="0" y1="0" x2="1" y2="1">
                <stop offset="0" stopColor="#1977d2" />
                <stop offset=".6" stopColor="#4a5bb5" />
                <stop offset="1" stopColor="#1b67c0" />
              </linearGradient>
            </defs>
            <rect x="1" y="1" width="22" height="22" rx="3" fill="url(#pho)" />
            <path d="M1 20 11 10q1.500-1.500 3 0l9 9v1q0 3-3 3H4q-3 0-3-3z" fill="#35b5ee" />
            <path d="m7 23 6-7q1-1 2 0l6 6.500q-.5.500-1 .5z" fill="#8cdcff" />
            <circle cx="17.500" cy="5.500" r="2" fill="#fff" />
          </svg>
        </AppSlot>
      </div>

      <div className="ml-auto flex items-center text-[#1b1b1b]">
        <svg viewBox="0 0 10 10" className="size-[10px]">
          <path d="m1 7 4-4 4 4" fill="none" stroke="currentColor" strokeWidth="1.300" />
        </svg>
        <svg viewBox="0 0 18 16" className="ml-[18px] h-4 w-[18px]">
          <path d="M6 11.500H4.200a3 3 0 0 1-.3-6A4.800 4.800 0 0 1 13 5q2.800.2 3.300 2.500" fill="none" stroke="currentColor" strokeWidth="1.300" />
          <path d="M7.500 10.300A4 4 0 0 1 14.500 8M15.500 10.700a4 4 0 0 1-7 2.300" fill="none" stroke="#1f5f96" strokeWidth="1.500" />
          <path d="M15.300 6v3h-3zM7.700 15v-3h3z" fill="#1f5f96" />
        </svg>
        <svg viewBox="0 0 12 16" className="ml-[18px] h-4 w-3">
          <rect x="3.500" y="1" width="5" height="8.500" rx="2.500" fill="#7eb5ea" stroke="#1b6ec2" />
          <path d="M1.500 7.500a4.500 4.500 0 0 0 9 0M6 12v3" fill="none" stroke="#1b6ec2" strokeWidth="1.200" />
        </svg>
        <svg viewBox="0 0 16 14" className="ml-[18px] h-[14px] w-4">
          <path d="M1 5a10 10 0 0 1 14 0M3.200 7.500a7 7 0 0 1 9.600 0M5.400 10a4 4 0 0 1 5.200 0" fill="none" stroke="currentColor" strokeWidth="1.200" />
          <circle cx="8" cy="12" r="1.200" fill="currentColor" />
        </svg>
        <svg viewBox="0 0 17 14" className="ml-[8px] h-[14px] w-[17px]">
          <path d="M1 5h2.500L7 1.800v10.400L3.500 9H1zM9.500 5a3 3 0 0 1 0 4M11.500 3.300a5.500 5.500 0 0 1 0 7.400M13.700 1.500a8 8 0 0 1 0 11" fill="none" stroke="currentColor" strokeWidth="1.100" />
        </svg>
        <svg viewBox="0 0 17 14" className="ml-[7px] h-[14px] w-[17px]">
          <path d="M6 3.500h7q1.500 0 1.500 1.500v5q0 1.500-1.500 1.500H4" fill="none" stroke="currentColor" />
          <rect x="6" y="4.500" width="7.500" height="6" rx=".5" fill="currentColor" />
          <path d="M15.800 6v3" stroke="currentColor" strokeWidth="1.200" />
          <path d="M1 3.500h4.500v2.500q0 2-2.200 2T1 6zM2.200 1v2.500M4.500 1v2.500M3.300 8v4" stroke="currentColor" fill="#1b1b1b" />
        </svg>
        <div className="ml-[9px] w-[62px] whitespace-nowrap text-right text-[11.500px] leading-4 tracking-[-0.05px]">
          <p>12:46 PM</p>
          <p>7/17/2024</p>
        </div>
        <svg viewBox="0 0 14 16" className="ml-[8px] h-4 w-[14px]">
          <path d="M7 1a4.800 4.800 0 0 1 4.800 4.800V9l1.500 3H.7l1.500-3V5.800A4.800 4.800 0 0 1 7 1zM5 13h4a2 2 0 0 1-4 0z" fill="#0b3d91" />
        </svg>
        <div className="relative ml-[17px] mr-[19px]">
          <svg viewBox="0 0 24 24" className="size-6">
            <path d="M8 2h7q2 0 2.500 2L19 9H9l-2 7H4q-3 0-3-3Q2 7 4 4.500 5.500 2 8 2z" fill="#1c8fe6" />
            <path d="M1 13q.5-4 2-7l4 1-1.500 9H4q-3 0-3-3z" fill="#3ec46b" />
            <path d="M16 22H9q-2 0-2.500-2L5 16h9l2.500-8H20q3 0 3 3-.5 5-2.500 8.500Q19 22 16 22z" fill="#e85a9b" />
            <path d="M19 8h1q3 0 3 3-.5 4-2 7l-4-1z" fill="#a55be8" />
            <path d="M9 22q-2 0-2.500-2L5.500 16H12l-1 6z" fill="#f9b52c" />
          </svg>
          <div className="absolute -bottom-[1px] left-[7px] rounded-[2px] bg-[#1b1b1b] px-[2px] text-[7px] font-bold leading-[9px] text-[#ffd23c]">PRE</div>
        </div>
      </div>
    </div>
  );
}

export default function App() {
  return (
    <div className="flex h-[1080px] w-[1923px] overflow-hidden bg-black font-['Roboto',sans-serif]">
      <div className="flex w-1 shrink-0 flex-col bg-black">
        <div className="h-[34px] bg-[#262523]" />
        <div className="h-[35px] bg-[#131212]" />
        <div className="h-[272px] bg-[#22211f]" />
        <div className="h-[22px] bg-[#37373d]" />
        <div className="h-[668px] bg-[#1a1918]" />
      </div>
      <div className="flex flex-1 flex-col">
        <div className="flex h-[1032px] shrink-0 border-b border-[#777]">
          <LeftWindow />
          <RightWindow />
        </div>
        <Taskbar />
      </div>
    </div>
  );
}
